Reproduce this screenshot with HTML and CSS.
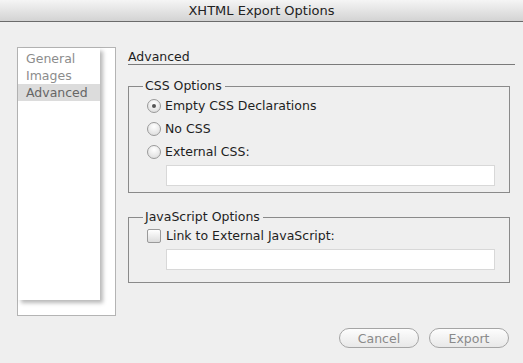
FILE: index.html
```html
<!DOCTYPE html>
<html lang="en">
  <head>
    <meta charset="UTF-8" />
    <title>XHTML Export Options</title>
    <link rel="stylesheet" href="styles.css">
  </head>
  <body>
    <div class="window">
      <div class="titlebar">XHTML Export Options</div>
      <div class="content">
        <div class="sidebar">
          <ul class="pages">
            <li>General</li>
            <li>Images</li>
            <li class="selected">Advanced</li>
          </ul>
        </div>
        <div class="panel">
          <h2 class="heading">Advanced</h2>
          <fieldset class="group css-group">
            <legend>CSS Options</legend>
            <label class="option"><span class="radio checked"></span>Empty CSS Declarations</label>
            <label class="option"><span class="radio"></span>No CSS</label>
            <label class="option"><span class="radio"></span>External CSS:</label>
            <div class="field"></div>
          </fieldset>
          <fieldset class="group js-group">
            <legend>JavaScript Options</legend>
            <label class="option"><span class="check"></span>Link to External JavaScript:</label>
            <div class="field"></div>
          </fieldset>
          <div class="buttons">
            <button class="btn">Cancel</button>
            <button class="btn">Export</button>
          </div>
        </div>
      </div>
    </div>
  </body>
</html>
```

FILE: styles.css
```css
html,
body {
  margin: 0;
  padding: 0;
  background-color: #efefef;
  font-family: "DejaVu Sans", "Liberation Sans", sans-serif;
  font-size: 12px;
  color: #1e1e1e;
}

.window {
  width: 523px;
  height: 363px;
  overflow: hidden;
}

.titlebar {
  height: 21px;
  line-height: 22px;
  text-align: center;
  font-size: 13px;
  color: #222;
  background: linear-gradient(#f5f5f5, #d3d3d3);
  border-bottom: 1px solid #6b6b6b;
}

.content {
  display: flex;
}

.sidebar {
  margin: 25px 0 0 17px;
  width: 97px;
  height: 267px;
  border: 1px solid #b4b4b4;
  background-color: #fff;
}

.pages {
  list-style: none;
  margin: 0;
  padding: 2px 0 0 0;
  width: 82px;
  height: 250px;
  background-color: #fff;
  box-shadow: 3px 3px 4px rgba(0, 0, 0, 0.28);
}

.pages li {
  padding-left: 8px;
  height: 17px;
  line-height: 17px;
  font-size: 12.5px;
  color: #8c8c8c;
}

.pages li.selected {
  background-color: #dcdcdc;
  color: #666;
}

.panel {
  margin-left: 12px;
  width: 382px;
  display: flex;
  flex-direction: column;
}

.heading {
  margin: 27px 0 0 0;
  width: 387px;
  font-size: 12.5px;
  font-weight: normal;
  line-height: 15px;
  padding-bottom: 0;
  border-bottom: 1px solid #7a7a7a;
}

.group {
  margin: 0;
  padding: 0 0 0 18px;
  border: 1px solid #8a8a8a;
}

.group legend {
  margin-left: -4px;
  padding: 0 3px 0 2px;
  font-size: 12.5px;
  line-height: 14px;
}

.css-group {
  margin-top: 14px;
  height: 112px;
}

.js-group {
  margin-top: 17px;
  height: 71px;
}

.option {
  display: flex;
  align-items: center;
  height: 23px;
  font-size: 12.5px;
}

.css-group .option:first-of-type {
  margin-top: 1px;
}

.radio {
  width: 12px;
  height: 12px;
  border: 1px solid #9a9a9a;
  border-radius: 50%;
  background: radial-gradient(circle at 50% 30%, #fff, #d8d8d8);
  margin-right: 4px;
  position: relative;
}

.radio.checked::after {
  content: "";
  position: absolute;
  left: 4px;
  top: 4px;
  width: 4px;
  height: 4px;
  border-radius: 50%;
  background-color: #555;
}

.check {
  width: 12px;
  height: 12px;
  border: 1px solid #9a9a9a;
  border-radius: 2px;
  background: linear-gradient(#fff, #dcdcdc);
  margin-right: 5px;
}

.field {
  margin: 2px 0 0 19px;
  width: 327px;
  height: 19px;
  background-color: #fff;
  border: 1px solid #d8d8d8;
}

.buttons {
  display: flex;
  justify-content: flex-end;
  gap: 10px;
  margin-top: 45px;
  width: 381px;
}

.btn {
  width: 80px;
  height: 20px;
  border: 1px solid #a5a5a5;
  border-radius: 10px;
  background: linear-gradient(#fdfdfd, #e8e8e8);
  font-family: inherit;
  font-size: 12.5px;
  color: #8a8a8a;
  padding: 0;
}
```
